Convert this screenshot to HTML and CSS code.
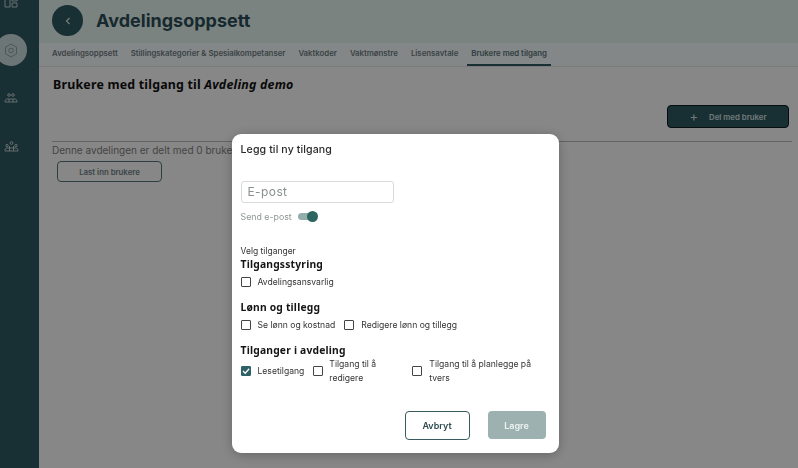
FILE: index.html
```html
<!DOCTYPE html>
<html lang="no">
<head>
    <meta charset="UTF-8">
    <meta name="viewport" content="width=device-width, initial-scale=1.0">
    <title>Avdelingsoppsett</title>
    <link rel="stylesheet" href="styles.css">
</head>
<body>
    <div class="app">
        <nav class="sidebar">
            <div class="side-item side-top">
                <svg width="14" height="8" viewBox="0 0 14 8" fill="none" stroke="#c4d2d4" stroke-width="1"><path d="M1 -3h5v10H1zM8 -3h5v4H8zM8 3h5v4H8z"/></svg>
            </div>
            <div class="side-item side-active">
                <svg width="14" height="15" viewBox="0 0 14 15" fill="none" stroke="#8fa3a6" stroke-width="1"><path d="M7 1l5.500 3.200v6.600L7 14l-5.500-3.200V4.200z"/><circle cx="7" cy="7.500" r="2.300"/></svg>
            </div>
            <div class="side-item">
                <svg width="14" height="10" viewBox="0 0 14 10" fill="none" stroke="#dfe8e9" stroke-width="0.800"><circle cx="5" cy="2" r="1.300"/><circle cx="9" cy="2" r="1.300"/><path d="M1 9c0-2 1-3 2-3h8c1 0 2 1 2 3z"/><path d="M5 6v3M9 6v3"/></svg>
            </div>
            <div class="side-item">
                <svg width="15" height="11" viewBox="0 0 15 11" fill="none" stroke="#dfe8e9" stroke-width="0.800"><circle cx="7.500" cy="2" r="1.400"/><circle cx="3" cy="4.500" r="1.200"/><circle cx="12" cy="4.500" r="1.200"/><path d="M1 10c0-2 .5-3 2-3h9c1.500 0 2 1 2 3z"/><path d="M5.500 5v5M9.500 5v5"/></svg>
            </div>
        </nav>
        <div class="main">
            <header class="topbar">
                <button class="back-btn">
                    <svg width="6" height="8" viewBox="0 0 6 8" fill="none" stroke="#dfe8e8" stroke-width="1.200"><path d="M4.500 1L1.500 4l3 3"/></svg>
                </button>
                <h1>Avdelingsoppsett</h1>
            </header>
            <div class="tabs">
                <a class="tab">Avdelingsoppsett</a>
                <a class="tab">Stillingskategorier &amp; Spesialkompetanser</a>
                <a class="tab">Vaktkoder</a>
                <a class="tab">Vaktmønstre</a>
                <a class="tab">Lisensavtale</a>
                <a class="tab tab-active">Brukere med tilgang</a>
            </div>
            <section class="content">
                <h2>Brukere med tilgang til <em>Avdeling demo</em></h2>
                <div class="share-row">
                    <button class="share-btn"><span class="plus">+</span>Del med bruker</button>
                </div>
                <p class="shared-text">Denne avdelingen er delt med 0 brukere</p>
                <button class="load-btn">Last inn brukere</button>
            </section>
        </div>
    </div>

    <div class="overlay">
        <div class="modal">
            <h3>Legg til ny tilgang</h3>
            <div class="email-input">E-post</div>
            <div class="send-row">
                <span>Send e-post</span>
                <span class="switch"><span class="knob"></span></span>
            </div>
            <p class="choose">Velg tilganger</p>
            <h4 class="first">Tilgangsstyring</h4>
            <div class="checks">
                <label class="check"><span class="box"></span>Avdelingsansvarlig</label>
            </div>
            <h4>Lønn og tillegg</h4>
            <div class="checks">
                <label class="check"><span class="box"></span>Se lønn og kostnad</label>
                <label class="check"><span class="box"></span>Redigere lønn og tillegg</label>
            </div>
            <h4>Tilganger i avdeling</h4>
            <div class="checks checks-wrap">
                <label class="check"><span class="box box-on">
                    <svg width="10" height="10" viewBox="0 0 10 10" fill="none" stroke="#fff" stroke-width="1.300"><path d="M2 5l2.200 2.200L8.200 2.800"/></svg>
                </span>Lesetilgang</label>
                <label class="check check-edit"><span class="box"></span>Tilgang til å redigere</label>
                <label class="check check-plan"><span class="box"></span>Tilgang til å planlegge på tvers</label>
            </div>
            <div class="modal-actions">
                <button class="cancel-btn">Avbryt</button>
                <button class="save-btn">Lagre</button>
            </div>
        </div>
    </div>
</body>
</html>
```

FILE: styles.css
```css
* {
    box-sizing: border-box;
}
body {
    margin: 0;
    height: 468px;
    overflow: hidden;
    font-family: Inter, "Liberation Sans", sans-serif;
    background-color: #fff;
    color: #1d2f33;
}
button {
    font-family: inherit;
    cursor: pointer;
}
.app {
    display: flex;
    height: 468px;
}
.sidebar {
    width: 39px;
    flex-shrink: 0;
    background-color: #2f5a63;
    display: flex;
    flex-direction: column;
    align-items: center;
}
.side-item {
    display: flex;
    align-items: center;
    justify-content: center;
    width: 32px;
    height: 32px;
    margin-left: -17px;
    margin-bottom: 16px;
}
.side-top {
    height: 8px;
    margin-bottom: 26px;
    margin-left: -17px;
}
.side-active {
    background-color: #cfdfe0;
    border-radius: 50%;
    margin-bottom: 16px;
}
.main {
    flex: 1;
    min-width: 0;
}
.topbar {
    height: 43px;
    background-color: #e8f8f3;
    display: flex;
    align-items: center;
    padding: 0 0 2px 13px;
    gap: 13px;
}
.back-btn {
    width: 31px;
    height: 31px;
    border: none;
    border-radius: 50%;
    background-color: #2f5a63;
    display: flex;
    align-items: center;
    justify-content: center;
    padding: 0;
}
h1 {
    margin: 0;
    font-size: 18px;
    font-weight: 700;
    color: #2d4f57;
}
.tabs {
    height: 24px;
    background-color: #faffff;
    border-bottom: 1px solid #e6e6e6;
    display: flex;
    gap: 5px;
    padding-left: 9px;
}
.tab {
    padding: 0 4px;
    height: 23px;
    font-size: 7.800px;
    font-weight: 600;
    line-height: 21px;
    color: #6f8085;
    white-space: nowrap;
}
.tab-active {
    color: #58757a;
    border-bottom: 2px solid #2f5a63;
}
.content {
    padding: 10px 6px 0 13px;
}
h2 {
    margin: 0;
    padding-left: 1px;
    font-family: "Noto Sans", sans-serif;
    font-size: 12.400px;
    font-weight: 700;
    line-height: 16px;
    letter-spacing: 0.2px;
    color: #111;
}
.share-row {
    display: flex;
    justify-content: flex-end;
    margin-top: 12px;
    padding-right: 3px;
    padding-bottom: 13px;
    border-bottom: 1px solid #bbb;
}
.share-btn {
    width: 122px;
    height: 23px;
    background-color: #2f5a63;
    border: 1px solid #0c1a1d;
    border-radius: 4px;
    color: #d6e2e2;
    font-size: 7.800px;
    font-weight: 600;
    display: flex;
    align-items: center;
    justify-content: center;
    gap: 11px;
    padding: 0;
}
.plus {
    font-size: 13px;
    font-weight: 400;
    line-height: 1;
}
.shared-text {
    margin: 1px 0 0;
    font-size: 10px;
    line-height: 14px;
    color: #7f7f7f;
}
.load-btn {
    display: block;
    width: 105px;
    height: 21px;
    margin: 4px 0 0 5px;
    background: none;
    border: 1px solid #5a787c;
    border-radius: 4px;
    color: #6e8386;
    font-size: 7.800px;
    font-weight: 600;
}
.overlay {
    position: fixed;
    top: 0;
    left: 0;
    width: 100%;
    height: 100%;
    background-color: rgba(0, 0, 0, 0.47);
    display: flex;
    justify-content: center;
    padding: 134px 8px 0 0;
}
.modal {
    width: 327px;
    height: 319px;
    background-color: #fff;
    border-radius: 9px;
    padding: 9px 9px 0 9px;
    box-shadow: 0 2px 12px rgba(0, 0, 0, 0.25);
}
h3 {
    margin: 0;
    font-size: 10.600px;
    font-weight: 500;
    line-height: 13px;
    color: #2a2a2a;
    letter-spacing: 0.1px;
}
.email-input {
    width: 153px;
    height: 22px;
    margin-top: 25px;
    border: 1px solid #d8dcdc;
    border-radius: 3px;
    padding-left: 6px;
    font-size: 12px;
    line-height: 20px;
    color: #8a8f8f;
    letter-spacing: 0.4px;
}
.send-row {
    display: flex;
    align-items: center;
    gap: 6px;
    margin-top: 7px;
    height: 13px;
    font-size: 8.800px;
    color: #8f9696;
}
.switch {
    display: block;
    position: relative;
    width: 19px;
    height: 7px;
    border-radius: 4px;
    background-color: #93aeaa;
}
.knob {
    position: absolute;
    right: -1px;
    top: -2px;
    width: 11px;
    height: 11px;
    border-radius: 50%;
    background-color: #2c6460;
}
.choose {
    margin: 22px 0 0;
    font-size: 8.500px;
    line-height: 12px;
    color: #333;
}
h4 {
    margin: 11px 0 0;
    font-family: "Noto Sans", sans-serif;
    font-size: 10.300px;
    font-weight: 700;
    line-height: 14px;
    letter-spacing: 0.2px;
    color: #151515;
}
h4.first {
    margin-top: 0;
    margin-bottom: 1px;
}
.checks {
    display: flex;
    align-items: center;
    gap: 9px;
    margin-top: 4px;
    font-size: 8.600px;
    line-height: 14px;
    color: #333;
}
.checks-wrap {
    margin-top: 0;
    gap: 0;
}
.check {
    display: flex;
    align-items: center;
    gap: 7px;
}
.check-edit {
    width: 99px;
    margin-left: 9px;
    padding-right: 30px;
    gap: 6px;
}
.check-plan {
    width: 130px;
}
.box {
    display: block;
    width: 10px;
    height: 10px;
    flex-shrink: 0;
    border: 1px solid #444;
    border-radius: 1px;
}
.box-on {
    background-color: #2f6268;
    border-color: #2f6268;
}
.box-on svg {
    display: block;
    margin: -1px;
}
.modal-actions {
    display: flex;
    justify-content: flex-end;
    gap: 18px;
    margin-top: 26px;
    padding-right: 4px;
}
.cancel-btn {
    width: 65px;
    height: 29px;
    background: #fff;
    border: 1px solid #3a5a5e;
    border-radius: 4px;
    color: #2e4a4e;
    font-size: 9px;
    font-weight: 600;
}
.save-btn {
    width: 58px;
    height: 28px;
    background-color: #9db2b0;
    border: none;
    border-radius: 4px;
    color: #eef3f2;
    font-size: 9px;
    font-weight: 600;
}
```
